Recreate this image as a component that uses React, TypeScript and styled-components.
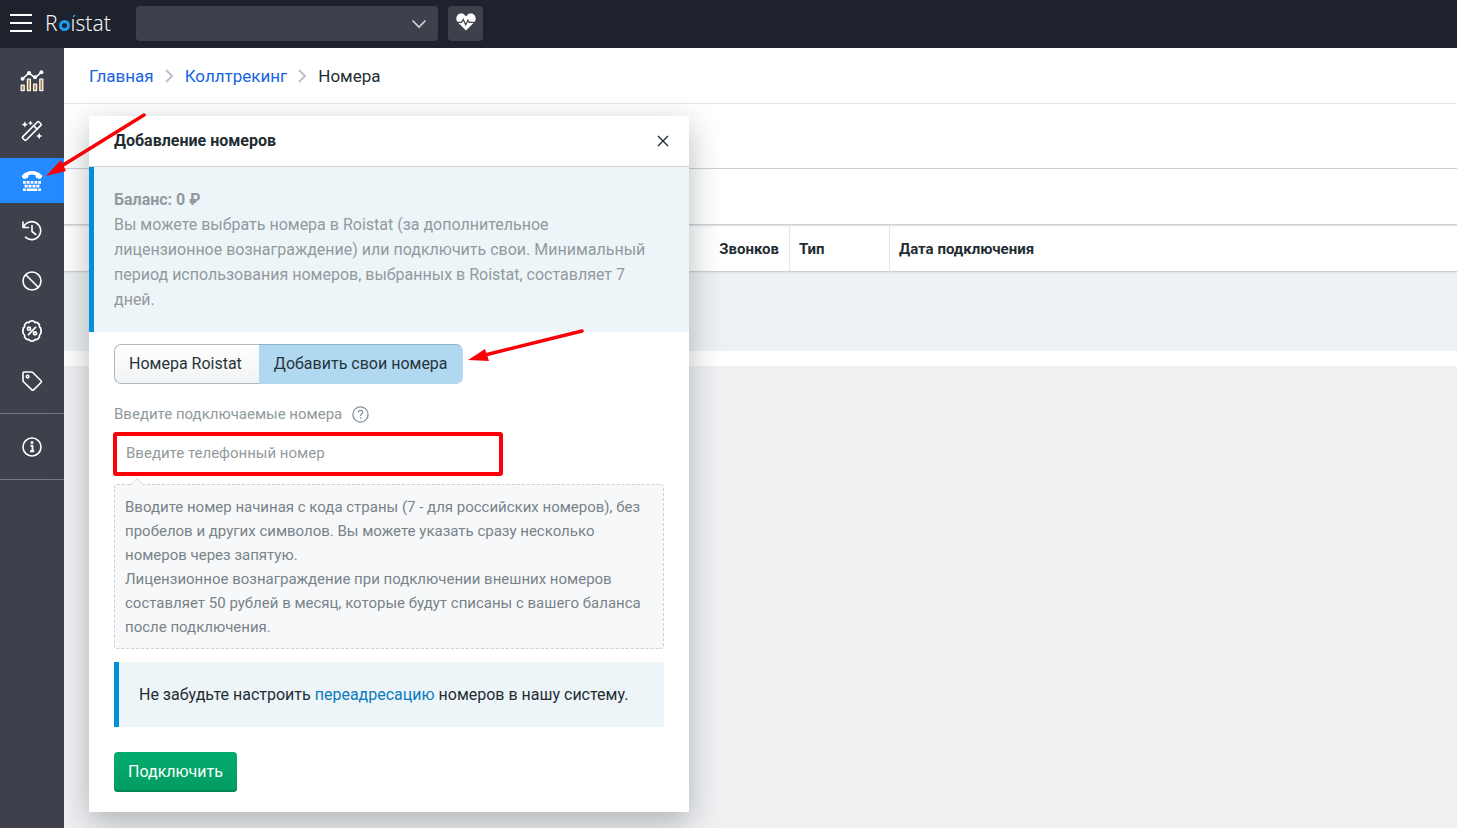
import React from "react";
import styled, { createGlobalStyle, css } from "styled-components";

const GlobalStyle = createGlobalStyle`
  *, *::before, *::after { box-sizing: border-box; }
  body {
    margin: 0;
    background: #f0f1f3;
    color: #1f2d33;
    font-family: Roboto, "Noto Sans", sans-serif;
    font-size: 16px;
    line-height: 24px;
  }
  button, input, select { font: inherit; }
  a { text-decoration: none; }
`;

const Page = styled.div`
  display: flex;
  flex-direction: column;
  min-height: 100vh;
`;

const TopBar = styled.header`
  display: flex;
  align-items: center;
  height: 48px;
  padding: 0 10px 2px;
  background: #1e222d;
`;

const MenuButton = styled.button`
  display: flex;
  padding: 0;
  border: 0;
  background: none;
  color: #fff;
  cursor: pointer;
`;

const Logo = styled.a`
  display: flex;
  align-items: baseline;
  width: 91px;
  margin-left: 13px;
  color: #f2f3f5;
  font-family: "Noto Sans", sans-serif;
  font-size: 21px;
  font-weight: 300;
  line-height: 32px;
`;

const LogoRing = styled.svg`
  flex: none;
  width: 13px;
  height: 11px;
  overflow: visible;
`;

const ProjectPicker = styled.div`
  position: relative;
  width: 302px;
  color: #d5d6da;
`;

const ProjectSelect = styled.select`
  display: block;
  width: 100%;
  height: 35px;
  padding: 0 40px 0 12px;
  border: 0;
  border-radius: 4px;
  appearance: none;
  background: #3e404b;
  color: inherit;
`;

const PickerChevron = styled.svg`
  position: absolute;
  top: 13px;
  right: 11px;
  pointer-events: none;
`;

const HealthButton = styled.button`
  display: flex;
  align-items: center;
  justify-content: center;
  width: 35px;
  height: 35px;
  margin-left: 10px;
  padding: 0 0 2px;
  border: 0;
  border-radius: 4px;
  background: #3e404b;
  cursor: pointer;
`;

const Body = styled.div`
  display: flex;
  flex: 1;
`;

const SideBar = styled.nav`
  flex: none;
  width: 64px;
  background: #3e404b;
`;

const NavGroup = styled.div`
  display: flex;
  flex-direction: column;
  gap: 5px;
  padding: 10px 0;
  border-bottom: 1px solid #737780;
`;

const NavItem = styled.a<{ $active?: boolean }>`
  display: flex;
  align-items: center;
  justify-content: center;
  height: 45px;
  color: #fff;
  background: ${(p) => (p.$active ? "#2589ff" : "transparent")};
`;

const Main = styled.main`
  position: relative;
  flex: 1;
  min-width: 0;
`;

const Breadcrumbs = styled.nav`
  display: flex;
  align-items: center;
  gap: 11px;
  height: 56px;
  padding: 0 25px;
  border-bottom: 1px solid #e6e7e9;
  background: #fff;
  font-size: 17px;
`;

const Crumb = styled.a`
  color: #1565e0;
`;

const ToolStrip = styled.div<{ $height: number }>`
  height: ${(p) => p.$height}px;
  border-bottom: 1px solid #cdd0d3;
  background: #fff;
`;

const NumbersTable = styled.table`
  width: 100%;
  border-collapse: separate;
  border-spacing: 0;
  border-bottom: 15px solid #fff;
  table-layout: fixed;
`;

const HeadCell = styled.th<{ $width?: number; $right?: boolean }>`
  width: ${(p) => (p.$width ? `${p.$width}px` : "auto")};
  height: 47px;
  padding: 1px 10px 0 9px;
  border-right: 1px solid #e3e5e7;
  border-bottom: 1px solid #cdd0d3;
  background: #fff;
  box-shadow: inset 0 2px 2px -1px #dfe1e3;
  font-size: 15px;
  font-weight: 700;
  text-align: ${(p) => (p.$right ? "right" : "left")};
  &:last-child { border-right: 0; }
`;

const EmptyCell = styled.td`
  height: 79px;
  padding: 0;
  background: #edf1f4;
  box-shadow: inset 0 2px 2px -1px #dfe2e5;
`;

const Dialog = styled.section`
  position: absolute;
  top: 68px;
  left: 25px;
  width: 600px;
  padding-bottom: 20px;
  background: #fff;
  box-shadow: 0 10px 30px rgba(31, 45, 51, 0.32);
`;

const DialogHead = styled.header`
  display: flex;
  align-items: center;
  justify-content: space-between;
  height: 51px;
  padding: 0 20px 0 25px;
  border-bottom: 1px solid #d0d3d6;
`;

const DialogTitle = styled.h1`
  margin: 0;
  font-size: 16px;
  font-weight: 700;
`;

const CloseButton = styled.button`
  display: flex;
  padding: 0;
  border: 0;
  background: none;
  color: #1f2d33;
  cursor: pointer;
`;

const Notice = styled.div<{ $muted?: boolean }>`
  padding: 20px;
  border-left: 5px solid #0090d9;
  background: #edf5f9;
  color: ${(p) => (p.$muted ? "#929a9e" : "#1f2d33")};
  line-height: 25px;
`;

const NoticeLink = styled.a`
  color: #0a7bbd;
`;

const DialogBody = styled.form`
  display: flex;
  flex-direction: column;
  align-items: flex-start;
  padding: 12px 25px 0;
`;

const Tabs = styled.div`
  display: flex;
`;

const Tab = styled.button<{ $active?: boolean }>`
  height: 40px;
  padding: 0 17px 0 14px;
  border: 1px solid #aebabf;
  color: #26343a;
  cursor: pointer;
  ${(p) =>
    p.$active
      ? css`
          padding: 0 14px 0 15px;
          border-color: #8fb0c3 #b0d9f1 #b0d9f1;
          border-left-width: 0;
          border-radius: 0 7px 7px 0;
          background: #b0d9f1;
        `
      : css`
          border-right-width: 0;
          border-radius: 7px 0 0 7px;
          background: linear-gradient(#fff, #f1f2f3);
        `}
`;

const FieldRow = styled.div`
  display: flex;
  align-items: center;
  gap: 10px;
  margin-top: 18px;
  color: #8f999d;
  font-size: 15px;
`;

const HelpButton = styled.button`
  display: flex;
  padding: 0;
  border: 0;
  background: none;
  color: #87929a;
  cursor: pointer;
`;

const PhoneInput = styled.input`
  width: 388px;
  height: 42px;
  margin: 7px 0 0;
  padding: 0 11px 2px;
  border: 1px solid #aebabf;
  outline: 4px solid #fa0007;
  outline-offset: -3px;
  border-radius: 2px;
  background: #fff;
  font-size: 15px;
  &::placeholder { color: #929a9e; opacity: 1; }
`;

const Hint = styled.div`
  position: relative;
  width: 100%;
  margin: 9px 0 13px;
  padding: 10px 10px 9px;
  border: 1px dashed #cdd1d3;
  border-radius: 3px;
  background: #f7f8fa;
  color: #788388;
  font-size: 15px;
`;

const HintTip = styled.svg`
  position: absolute;
  top: -8px;
  left: 14px;
`;

const DialogNotice = styled(Notice)`
  width: 100%;
`;

const SubmitButton = styled.button`
  height: 40px;
  margin-top: 25px;
  padding: 0 14px;
  border: 0;
  border-radius: 4px;
  background: linear-gradient(#03ab6d, #029c62);
  box-shadow: inset 0 -2px 0 #00874f;
  color: #fff;
  cursor: pointer;
`;

const Arrows = styled.svg`
  position: absolute;
  top: 0;
  left: 0;
  overflow: visible;
  pointer-events: none;
`;

const icon = {
  width: 22,
  height: 22,
  viewBox: "0 0 22 22",
  fill: "none",
  stroke: "currentColor",
  strokeWidth: 1.6,
  strokeLinecap: "round",
  strokeLinejoin: "round",
  "aria-hidden": true,
} as const;

const ChartIcon = () => (
  <svg {...icon} width={24} height={24} viewBox="0 0 24 24">
    <path d="M2.5 10 9 3.8l6 5L21.500 3" />
    <g fill="currentColor" stroke="none">
      <circle cx="2.6" cy="9.8" r="2" />
      <circle cx="9" cy="4" r="2" />
      <circle cx="15" cy="8.3" r="2" />
      <circle cx="21.4" cy="3.2" r="2" />
    </g>
    <g fill="#a8875a" stroke="#fff5e6" strokeWidth="1.3">
      <path d="M1.200 16.200h3v5.400h-3zM7.400 10.200h3v11.400h-3zM13.600 15.200h3v6.400h-3zM19.800 10.200h3v11.400h-3z" />
    </g>
  </svg>
);

const WandIcon = () => (
  <svg {...icon} strokeWidth={1.6}>
    <rect x="-11.500" y="-2.400" width="23" height="4.800" rx="1.200" transform="translate(10.800 11) rotate(-45)" />
    <path d="m12.600 5.600 3.600 3.600" />
    <g fill="currentColor" stroke="none">
      <path d="m3.800 1.200 1 2.200 2.200 1-2.200 1-1 2.200-1-2.200-2.200-1 2.200-1zM9.500 .6l.8 1.700 1.700.8-1.700.8-.8 1.700-.8-1.700L7 3.100l1.700-.8zM18.200 12.800l1 2.200 2.200 1-2.200 1-1 2.200-1-2.200-2.200-1 2.200-1z" />
    </g>
  </svg>
);

const PhoneIcon = () => (
  <svg {...icon} fill="currentColor" stroke="none">
    <path d="M1 5.4C3.6 2.700 7.200 1 11 1s7.400 1.700 10 4.400c.3.300.3.700.1 1l-1.500 2.300c-.2.400-.7.500-1.100.3l-3.200-1.200c-.4-.2-.6-.5-.6-.9l-.2-2C12 4.200 10 4.200 7.500 4.900l-.2 2c0 .4-.2.700-.6.900L3.500 9c-.4.200-.9.100-1.100-.3L.9 6.400c-.2-.3-.2-.7.1-1z" />
    <path d="M2 11h2.800v2.700H2zM5.700 11h2.800v2.700H5.700zM9.600 11h2.800v2.700H9.600zM13.500 11h2.800v2.700h-2.800zM17.200 11H20v2.700h-2.800zM3.600 14.700h3v2.700h-3zM7.500 14.700h3v2.700h-3zM11.500 14.700h3v2.700h-3zM15.400 14.700h3v2.700h-3zM2 18.400h2.800v2.700H2zM5.700 18.400h10.600v2.700H5.700zM17.200 18.400H20v2.700h-2.800z" />
  </svg>
);

const HistoryIcon = () => (
  <svg {...icon}>
    <path d="M2 2v5.500h5.500M2.300 7.300A9 9 0 1 1 4.500 17.200M11 5.500V11.500l3.800 3" />
  </svg>
);

const BanIcon = () => (
  <svg {...icon}>
    <circle cx="11" cy="11" r="9" />
    <path d="m4.700 4.700 12.600 12.600" />
  </svg>
);

const PercentBadgeIcon = () => (
  <svg {...icon} viewBox="1 1 20 20">
    <path d="M11 1.800c1.300 0 2.200.5 2.800 1.500 1.200-.3 2.300 0 3 .9.900.7 1.200 1.800.9 3 1 .6 1.500 1.500 1.500 2.800v2c0 1.300-.5 2.200-1.500 2.800.3 1.200 0 2.300-.9 3-.7.900-1.800 1.200-3 .9-.6 1-1.500 1.500-2.800 1.500s-2.200-.5-2.800-1.500c-1.200.3-2.300 0-3-.9-.9-.7-1.200-1.800-.9-3-1-.6-1.500-1.500-1.500-2.800v-2c0-1.300.5-2.200 1.500-2.800-.3-1.200 0-2.300.9-3 .7-.9 1.800-1.200 3-.9.600-1 1.500-1.500 2.800-1.500z" />
    <circle cx="8.300" cy="8.900" r="1.400" />
    <circle cx="13.700" cy="13.100" r="1.400" />
    <path d="m14.200 7.800-6.400 6.400" />
  </svg>
);

const TagIcon = () => (
  <svg {...icon}>
    <path d="M2 3.200c0-.7.500-1.200 1.200-1.200h7.300c.5 0 .9.200 1.200.5l8.300 8.300c.5.500.5 1.200 0 1.700l-7.400 7.400c-.5.500-1.200.5-1.700 0L2.500 11.700c-.3-.3-.5-.7-.5-1.200z" />
    <circle cx="6.600" cy="6.600" r="1.300" />
  </svg>
);

const InfoIcon = () => (
  <svg {...icon}>
    <circle cx="11" cy="11" r="9" />
    <path d="M9.500 9.700h2V15M9 15.200h4.200" strokeWidth={1.9} strokeLinecap="butt" />
    <circle cx="11" cy="6.500" r="1.500" fill="currentColor" stroke="none" />
  </svg>
);

const CrumbChevron = () => (
  <svg width="9" height="14" viewBox="0 0 9 14" fill="none" stroke="#bcc0cb" strokeWidth="2" aria-hidden="true">
    <path d="m1 1 6 6-6 6" />
  </svg>
);

const navItems = [
  { label: "Аналитика", Icon: ChartIcon },
  { label: "Инструменты", Icon: WandIcon },
  { label: "Коллтрекинг", Icon: PhoneIcon, active: true },
  { label: "История", Icon: HistoryIcon },
  { label: "Антифрод", Icon: BanIcon },
  { label: "Скидки", Icon: PercentBadgeIcon },
  { label: "Метки", Icon: TagIcon },
];

export default function App() {
  return (
    <Page>
      <GlobalStyle />
      <TopBar>
        <MenuButton type="button" aria-label="Меню">
          <svg width="22" height="18" viewBox="0 0 22 18" stroke="currentColor" strokeWidth="2" aria-hidden="true">
            <path d="M0 1h22M0 9h22M0 17h22" />
          </svg>
        </MenuButton>
        <Logo href="#" aria-label="Roistat">
          R
          <LogoRing viewBox="0 0 13 11" aria-hidden="true">
            <circle cx="6.500" cy="5.500" r="4" fill="none" stroke="#1c9cf0" strokeWidth="3" />
            <path d="m15 -3 2-2" stroke="#1c9cf0" strokeWidth="1.600" />
          </LogoRing>
          ıstat
        </Logo>
        <ProjectPicker>
          <ProjectSelect aria-label="Проект" />
          <PickerChevron width="16" height="10" viewBox="0 0 16 10" fill="none" stroke="currentColor" strokeWidth="1.600" aria-hidden="true">
            <path d="m1.500 1.500 6.500 6.500 6.500-6.500" />
          </PickerChevron>
        </ProjectPicker>
        <HealthButton type="button" aria-label="Состояние проекта">
          <svg width="20" height="18" viewBox="0 0 20 18" aria-hidden="true">
            <path d="M10 17.500 1.700 9.200C-.2 7.200-.1 3.900 1.700 2 3.700.1 6.900.2 8.700 2.100L10 3.400l1.300-1.300c1.800-1.900 5-2 7-.1 1.800 1.900 1.900 5.200 0 7.200z" fill="#fff" />
            <path d="M1 9.300h4.600l1.600-3 2.500 5.500 2.300-4.600 1.200 2.100H19" fill="none" stroke="#3e404b" strokeWidth="1.200" />
          </svg>
        </HealthButton>
      </TopBar>
      <Body>
        <SideBar aria-label="Разделы">
          <NavGroup>
            {navItems.map(({ label, Icon, active }) => (
              <NavItem key={label} href="#" aria-label={label} $active={active}>
                <Icon />
              </NavItem>
            ))}
          </NavGroup>
          <NavGroup>
            <NavItem href="#" aria-label="Справка">
              <InfoIcon />
            </NavItem>
          </NavGroup>
        </SideBar>
        <Main>
          <Breadcrumbs aria-label="Навигация">
            <Crumb href="#">Главная</Crumb>
            <CrumbChevron />
            <Crumb href="#">Коллтрекинг</Crumb>
            <CrumbChevron />
            <span>Номера</span>
          </Breadcrumbs>
          <ToolStrip $height={65} />
          <ToolStrip $height={56} />
          <NumbersTable>
            <thead>
              <tr>
                <HeadCell $width={625} aria-label="Номер" />
                <HeadCell $width={101} $right>Звонков</HeadCell>
                <HeadCell $width={100}>Тип</HeadCell>
                <HeadCell>Дата подключения</HeadCell>
              </tr>
            </thead>
            <tbody>
              <tr>
                <EmptyCell colSpan={4} />
              </tr>
            </tbody>
          </NumbersTable>

          <Dialog role="dialog" aria-labelledby="dialog-title">
            <DialogHead>
              <DialogTitle id="dialog-title">Добавление номеров</DialogTitle>
              <CloseButton type="button" aria-label="Закрыть">
                <svg width="12" height="12" viewBox="0 0 12 12" stroke="currentColor" strokeWidth="1.400" aria-hidden="true">
                  <path d="m1 1 10 10M11 1 1 11" />
                </svg>
              </CloseButton>
            </DialogHead>
            <Notice $muted>
              <strong>Баланс: 0 ₽</strong>
              <br />
              Вы можете выбрать номера в Roistat (за дополнительное
              <br />
              лицензионное вознаграждение) или подключить свои. Минимальный
              <br />
              период использования номеров, выбранных в Roistat, составляет 7
              <br />
              дней.
            </Notice>
            <DialogBody>
              <Tabs>
                <Tab type="button">Номера Roistat</Tab>
                <Tab type="button" $active aria-pressed="true">Добавить свои номера</Tab>
              </Tabs>
              <FieldRow>
                <label htmlFor="phones">Введите подключаемые номера</label>
                <HelpButton type="button" aria-label="Подсказка">
                  <svg width="17" height="17" viewBox="0 0 17 17" fill="none" stroke="currentColor" strokeWidth="1.300" aria-hidden="true">
                    <circle cx="8.500" cy="8.500" r="7.600" />
                    <path d="M6.200 6.400c.1-1.400 1-2.100 2.300-2.100s2.300.8 2.300 2c0 1.700-2.200 1.800-2.200 3.700M8.600 11.300v1.500" />
                  </svg>
                </HelpButton>
              </FieldRow>
              <PhoneInput id="phones" type="text" placeholder="Введите телефонный номер" />
              <Hint>
                <HintTip width="16" height="9" viewBox="0 0 16 9" aria-hidden="true">
                  <path d="m1 8.500 7-7 7 7" fill="#f7f8fa" stroke="#d3d7d9" />
                </HintTip>
                Вводите номер начиная с кода страны (7 - для российских номеров), без
                <br />
                пробелов и других символов. Вы можете указать сразу несколько
                <br />
                номеров через запятую.
                <br />
                Лицензионное вознаграждение при подключении внешних номеров
                <br />
                составляет 50 рублей в месяц, которые будут списаны с вашего баланса
                <br />
                после подключения.
              </Hint>
              <DialogNotice>
                Не забудьте настроить <NoticeLink href="#">переадресацию</NoticeLink> номеров в нашу систему.
              </DialogNotice>
              <SubmitButton type="submit">Подключить</SubmitButton>
            </DialogBody>
          </Dialog>

          <Arrows width="1" height="1" viewBox="0 0 1 1" aria-hidden="true">
            <g stroke="#fa0007" strokeWidth="3.500" strokeLinecap="round">
              <path d="M80 67-4 119M518 283l-97 24" />
            </g>
            <path d="m-18 128 15-16 5 11zM404 312l17-11 4 12z" fill="#fa0007" />
          </Arrows>
        </Main>
      </Body>
    </Page>
  );
}
